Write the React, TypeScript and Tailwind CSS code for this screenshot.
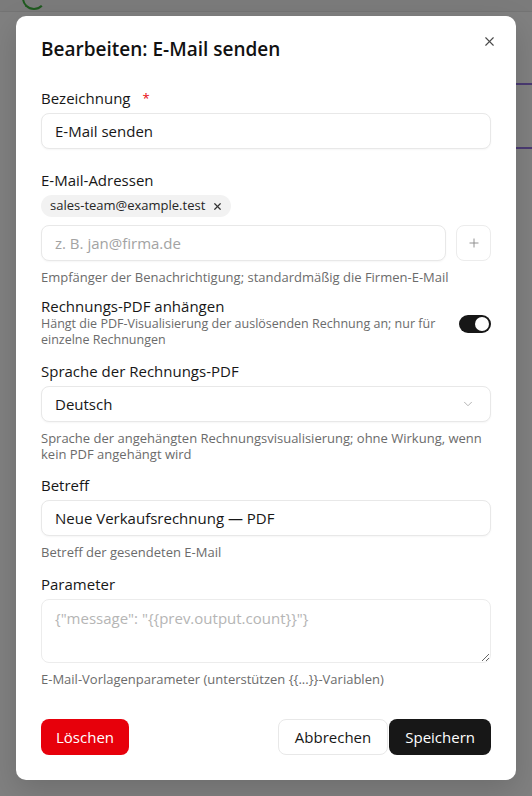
import { X, Plus, ChevronDown } from "lucide-react";

function Label({ children, required }: { children: React.ReactNode; required?: boolean }) {
  return (
    <div className="flex h-5 items-center text-[15px] leading-5 text-[#171717]">
      {children}
      {required && <span className="ml-3 text-[13px] text-red-600">*</span>}
    </div>
  );
}

function Help({ children }: { children: React.ReactNode }) {
  return <p className="text-[13px] leading-4 text-[#6b6b6b]">{children}</p>;
}

const inputCls =
  "h-9 w-full rounded-lg border border-[#e8e8e8] bg-white px-[13px] text-[15px] text-[#171717] shadow-[0_1px_2px_rgba(0,0,0,0.04)] outline-none placeholder:text-[#a3a3a3]";

export default function App() {
  return (
    <div
      className="relative h-[796px] w-[532px] overflow-hidden bg-[#808080]"
      style={{ fontFamily: '"Open Sans", "Noto Sans", sans-serif' }}
    >
      {/* page behind the overlay */}
      <div className="absolute inset-x-0 top-0 h-3 border-b border-[#747474] bg-[#7b7b7b]" />
      <div className="absolute left-[22px] top-[-14px] h-6 w-6 rounded-full border-2 border-[#1f5a1f] border-r-transparent border-t-transparent" />
      <div className="absolute right-0 top-[83px] h-[2px] w-4 bg-[#4a3a72]" />
      <div className="absolute right-0 top-[147px] h-[2px] w-4 bg-[#4a3a72]" />

      <div className="relative mx-4 mt-4 flex h-[764px] w-[500px] flex-col rounded-[10px] bg-white px-[25px] pt-[19px] shadow-[0_10px_30px_rgba(0,0,0,0.15)]">
        <button className="absolute right-[19px] top-[18px] text-[#4a4a4a]">
          <X size={15} strokeWidth={1.8} />
        </button>

        <h2 className="h-7 text-[19px] font-semibold leading-7 text-[#111]">Bearbeiten: E-Mail senden</h2>

        <div className="mt-[25px]">
          <Label required>Bezeichnung</Label>
          <input className={`${inputCls} mt-[5px]`} defaultValue="E-Mail senden" />
        </div>

        <div className="mt-[21px]">
          <Label>E-Mail-Adressen</Label>
          <div className="mt-[5px] flex">
            <span className="flex h-[22px] items-center gap-[7px] rounded-full bg-[#f2f2f2] pl-[9px] pr-[8px] text-[13px] text-[#262626]">
              sales-team@example.test
              <X size={11} strokeWidth={2.6} className="text-[#333]" />
            </span>
          </div>
          <div className="mt-2 flex gap-[10px]">
            <input className={inputCls} placeholder="z. B. jan@firma.de" />
            <button className="flex h-9 w-[35px] shrink-0 items-center justify-center rounded-lg border border-[#ececec] bg-white text-[#8a8a8a]">
              <Plus size={14} strokeWidth={1.6} />
            </button>
          </div>
          <div className="mt-2">
            <Help>Empfänger der Benachrichtigung; standardmäßig die Firmen-E-Mail</Help>
          </div>
        </div>

        <div className="mt-[13px] flex items-center justify-between gap-3">
          <div>
            <div className="h-[18px] text-[15px] leading-[17px] text-[#171717]">Rechnungs-PDF anhängen</div>
            <p className="text-[12.5px] leading-4 text-[#6b6b6b]">
              Hängt die PDF-Visualisierung der auslösenden Rechnung an; nur für einzelne Rechnungen
            </p>
          </div>
          <div className="mt-[2px] flex h-[18px] w-8 shrink-0 items-center justify-end rounded-full bg-[#171717] px-[2px]">
            <span className="h-[14px] w-[14px] rounded-full bg-white" />
          </div>
        </div>

        <div className="mt-[13px]">
          <Label>Sprache der Rechnungs-PDF</Label>
          <div className={`${inputCls} mt-[5px] flex items-center justify-between`}>
            <span>Deutsch</span>
            <ChevronDown size={14} strokeWidth={1.5} className="mr-[2px] text-[#a8a8a8]" />
          </div>
          <div className="mt-2">
            <Help>Sprache der angehängten Rechnungsvisualisierung; ohne Wirkung, wenn kein PDF angehängt wird</Help>
          </div>
        </div>

        <div className="mt-[13px]">
          <Label>Betreff</Label>
          <input className={`${inputCls} mt-[5px]`} defaultValue="Neue Verkaufsrechnung — PDF" />
          <div className="mt-2">
            <Help>Betreff der gesendeten E-Mail</Help>
          </div>
        </div>

        <div className="mt-[14px]">
          <Label>Parameter</Label>
          <textarea
            className="mt-[5px] block h-[64px] w-full resize-y rounded-lg border border-[#ececec] bg-white px-[13px] py-[6px] text-[15px] leading-6 text-[#171717] outline-none placeholder:text-[#b5b5b5]"
            placeholder={'{"message": "{{prev.output.count}}"}'}
          />
          <div className="mt-2">
            <Help>E-Mail-Vorlagenparameter (unterstützen {"{{...}}"}-Variablen)</Help>
          </div>
        </div>

        <div className="mt-[32px] flex items-center justify-between">
          <button className="h-9 rounded-lg bg-red-600 px-[15px] text-[15px] text-white">Löschen</button>
          <div className="flex">
            <button className="h-9 rounded-lg border border-[#e8e8e8] bg-white px-4 text-[15px] text-[#171717]">
              Abbrechen
            </button>
            <button className="ml-px h-9 rounded-lg bg-[#171717] px-4 text-[15px] text-white">Speichern</button>
          </div>
        </div>
      </div>
    </div>
  );
}
